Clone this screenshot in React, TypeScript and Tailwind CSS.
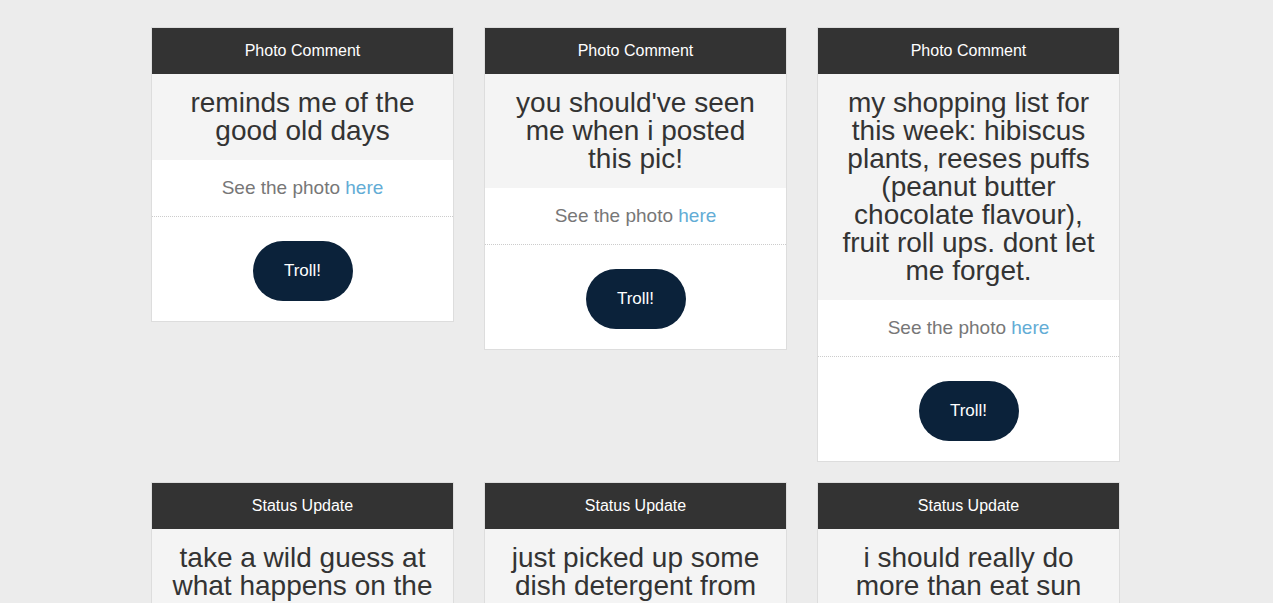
import React from 'react';

interface Post {
  kind: string;
  text: string;
}

const posts: Post[] = [
  { kind: 'Photo Comment', text: 'reminds me of the good old days' },
  { kind: 'Photo Comment', text: "you should've seen me when i posted this pic!" },
  {
    kind: 'Photo Comment',
    text: 'my shopping list for this week: hibiscus plants, reeses puffs (peanut butter chocolate flavour), fruit roll ups. dont let me forget.',
  },
  { kind: 'Status Update', text: 'take a wild guess at what happens on the weekend' },
  { kind: 'Status Update', text: 'just picked up some dish detergent from the store' },
  { kind: 'Status Update', text: 'i should really do more than eat sun chips all day' },
];

function Card({ post }: { post: Post }) {
  const isPhoto = post.kind === 'Photo Comment';
  return (
    <div className="border border-[#dddddd] bg-white">
      <div className="h-[46px] bg-[#333333] text-white text-[16px] flex items-center justify-center">{post.kind}</div>
      <p className="bg-[#f4f4f4] text-[#333333] text-[28px] leading-[28px] text-center px-5 py-[15px]">{post.text}</p>
      {isPhoto && (
        <p className="text-[19px] leading-[26px] py-[15px] text-center text-[#777777] border-b border-dotted border-[#cccccc]">
          See the photo <a className="text-[#63acd5]">here</a>
        </p>
      )}
      <div className="flex justify-center pt-6 pb-5">
        <button className="w-[100px] h-[60px] rounded-full bg-[#0b223a] text-white text-[17px]">Troll!</button>
      </div>
    </div>
  );
}

function App() {
  return (
    <main className="min-h-screen bg-[#ececec] font-['Liberation_Sans',Arial,sans-serif]">
      <div className="w-[999px] ml-[136px] pt-[27px] grid grid-cols-[333px_333px_333px] gap-y-5 items-start">
        {posts.map((p, i) => (
          <div key={i} className="px-[15px]">
            <Card post={p} />
          </div>
        ))}
      </div>
    </main>
  );
}

export default App;
